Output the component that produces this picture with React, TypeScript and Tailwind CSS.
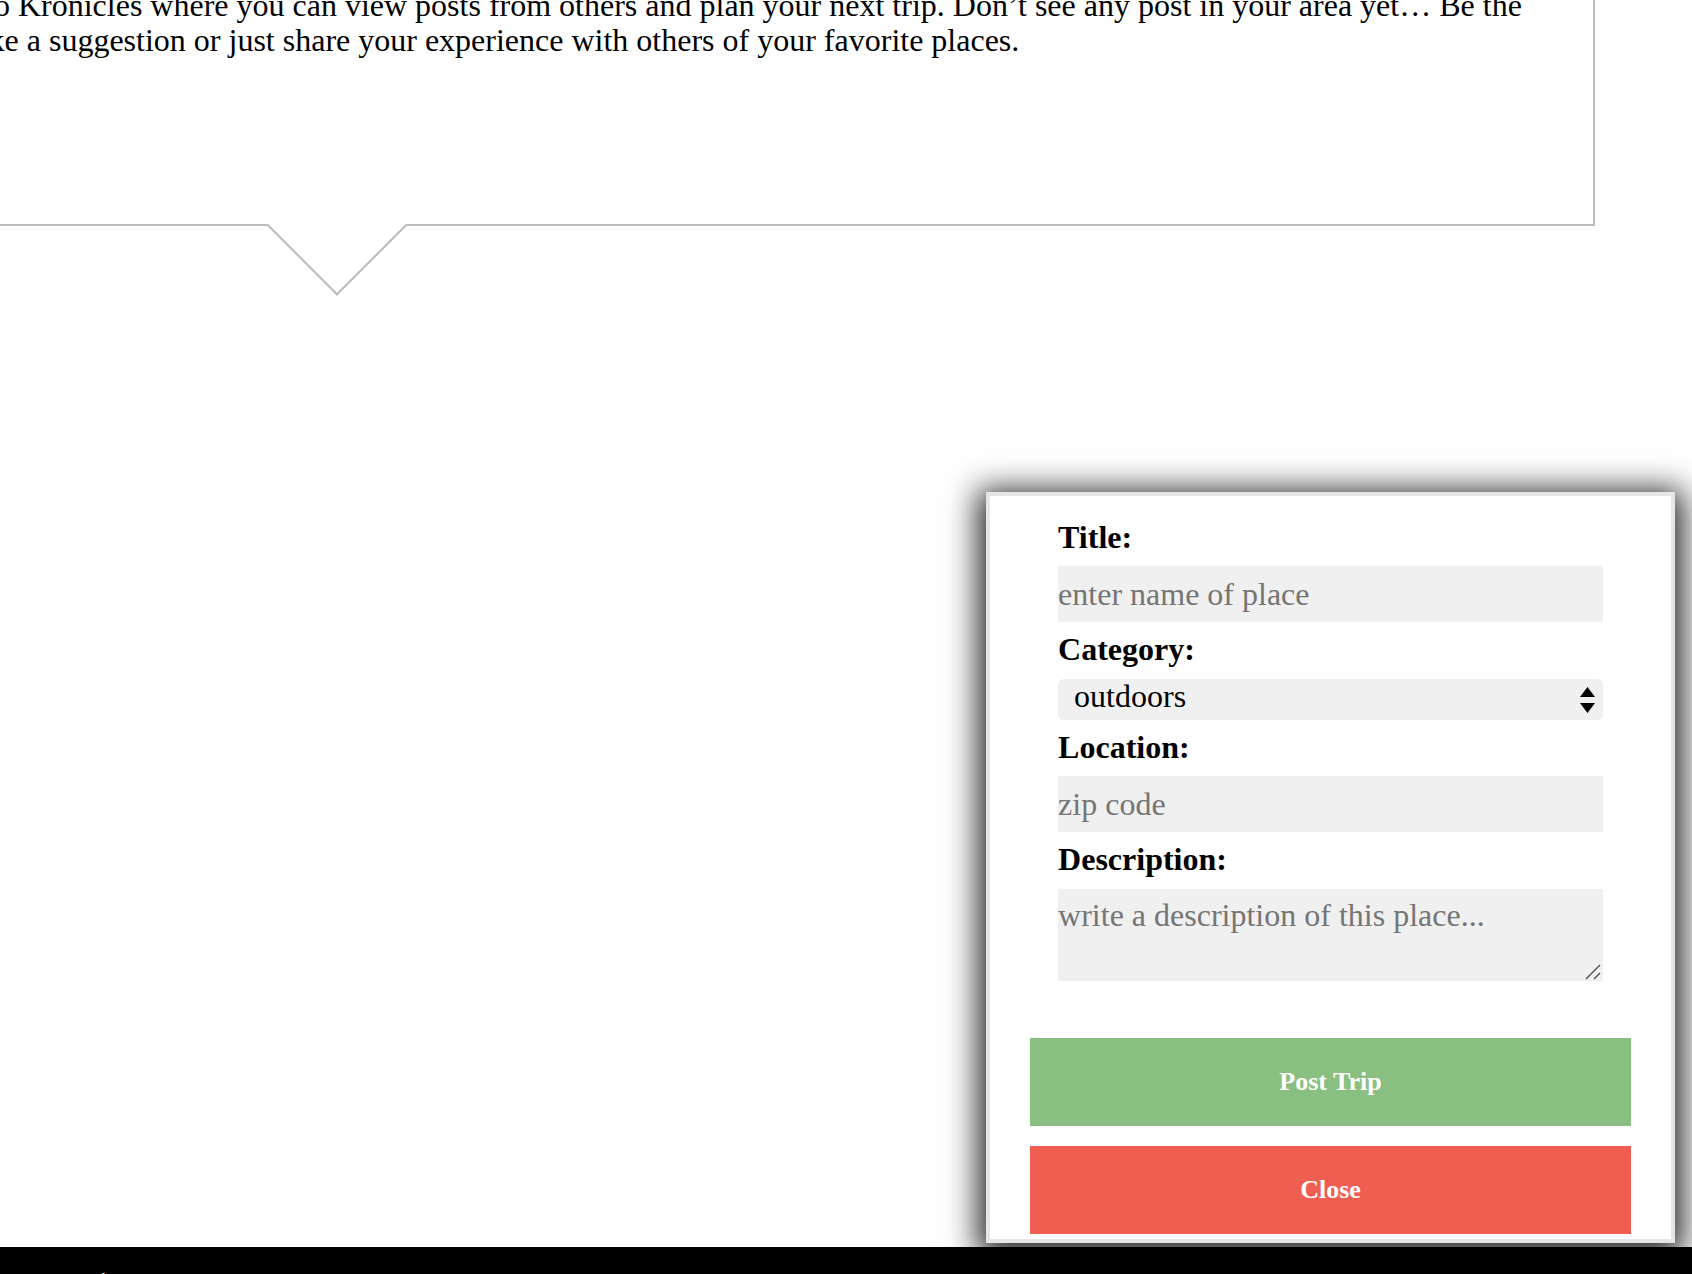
import React from "react";

export default function App() {
  return (
    <div className="relative flex h-[1274px] w-[1692px] flex-col overflow-hidden bg-white font-['Liberation_Serif','Times_New_Roman',serif] text-black">
      <main className="flex-1">
        <section className="relative -ml-[200px] -mt-[40px] w-[1795px] border-2 border-[#bbbbbb] pb-[165px] pl-[55px] pr-[43px] pt-[26px]">
          <p className="text-[32px] leading-[35.4px]">
            Welcome to Kronicles where you can view posts from others and plan your next trip. Don’t see any post in your
            area yet… Be the first to make a suggestion or just share your experience with others of your favorite places.
          </p>
          <div className="absolute left-[485px] top-[213px] h-[100px] w-[100px] rotate-45 border-b-2 border-r-2 border-[#bbbbbb] bg-white" />
        </section>
      </main>

      <footer className="h-[27px] shrink-0 overflow-hidden bg-black pl-[57px] pt-[24px] text-[16px] leading-[18px] text-white">
        Kronicles
      </footer>

      <div className="absolute left-[986px] top-[492px] w-[689px] border-4 border-[#e6e6e6] bg-white shadow-[0_6px_30px_8px_rgba(0,0,0,0.85)]">
        <form className="pb-[5px] pt-[24px]" onSubmit={(e) => e.preventDefault()}>
          <div className="mx-auto w-4/5">
            <label className="mb-[11px] block text-[32px] font-bold leading-[35.4px]">Title:</label>
            <input
              type="text"
              placeholder="enter name of place"
              className="mb-[10px] block h-[56px] w-full bg-[#f0f0f0] p-0 text-[32px] leading-[35.4px] outline-none placeholder:text-[#757575]"
            />

            <label className="mb-[11px] block text-[32px] font-bold leading-[35.4px]">Category:</label>
            <div className="relative mb-[10px] h-[41px] w-full rounded-[6px] bg-[#f0f0f0] pl-[16px] text-[32px] leading-[35.4px]">
              outdoors
              <svg
                className="absolute right-[8px] top-[8px]"
                width="15"
                height="27"
                viewBox="0 0 15 27"
                aria-hidden="true"
              >
                <polygon points="0,10 15,10 7.5,0" fill="#000" />
                <polygon points="0,16 15,16 7.5,26" fill="#000" />
              </svg>
            </div>

            <label className="mb-[11px] block text-[32px] font-bold leading-[35.4px]">Location:</label>
            <input
              type="text"
              placeholder="zip code"
              className="mb-[10px] block h-[56px] w-full bg-[#f0f0f0] p-0 text-[32px] leading-[35.4px] outline-none placeholder:text-[#757575]"
            />

            <label className="mb-[11px] block text-[32px] font-bold leading-[35.4px]">Description:</label>
            <div className="relative mb-[57px]">
              <textarea
                placeholder="write a description of this place..."
                className="block h-[92px] w-full resize-none bg-[#f0f0f0] px-0 pt-[9px] text-[32px] leading-[35.4px] outline-none placeholder:text-[#757575]"
              />
              <svg
                className="pointer-events-none absolute bottom-[1px] right-[1px]"
                width="18"
                height="18"
                viewBox="0 0 18 18"
                aria-hidden="true"
              >
                <line x1="2" y1="17" x2="16" y2="3" stroke="#555" strokeWidth="1.4" />
                <line x1="10" y1="17" x2="16" y2="11" stroke="#555" strokeWidth="1.4" />
              </svg>
            </div>
          </div>

          <div className="mx-[40px] flex flex-col gap-[20px]">
            <button
              type="submit"
              className="flex h-[88px] w-full items-center justify-center bg-[#8abf82] text-[26px] font-bold text-white"
            >
              Post Trip
            </button>
            <button
              type="button"
              className="flex h-[88px] w-full items-center justify-center bg-[#f05e51] text-[26px] font-bold text-white"
            >
              Close
            </button>
          </div>
        </form>
      </div>
    </div>
  );
}
